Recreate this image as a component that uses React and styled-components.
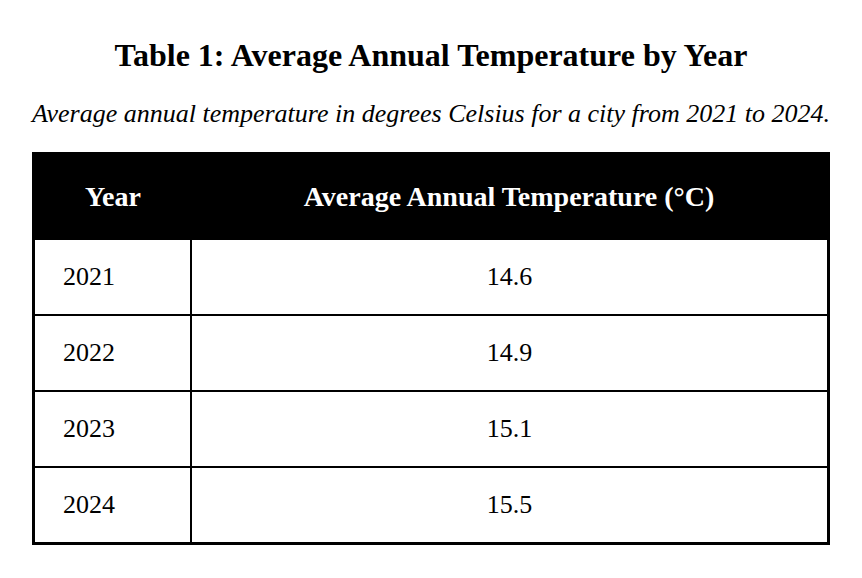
import React from "react";
import styled, { createGlobalStyle } from "styled-components";

const GlobalStyle = createGlobalStyle`
  html, body {
    margin: 0;
    padding: 0;
    background: #fff;
  }
  body {
    font-family: "Liberation Serif", "Times New Roman", serif;
    color: #000;
  }
`;

const Page = styled.div`
  padding: 37px 32px 0;
`;

const Title = styled.h1`
  margin: 0;
  font-size: 32px;
  font-weight: bold;
  text-align: center;
  line-height: 36px;
`;

const Caption = styled.p`
  margin: 26px 0 0;
  font-size: 26px;
  font-style: italic;
  text-align: center;
  line-height: 30px;
  white-space: nowrap;
`;

const Table = styled.table`
  width: 100%;
  margin-top: 23px;
  border-collapse: collapse;
  border: 3px solid #000;
`;

const HeadCell = styled.th`
  background: #000;
  color: #fff;
  font-size: 28px;
  font-weight: bold;
  height: 83px;
  padding: 0 28px;
  text-align: center;
  width: ${(p) => p.width || "auto"};
`;

const Cell = styled.td`
  font-size: 26px;
  height: 74px;
  padding: 0 28px;
  border: 2px solid #000;
  text-align: ${(p) => (p.center ? "center" : "left")};
`;

const rows = [
  ["2021", "14.6"],
  ["2022", "14.9"],
  ["2023", "15.1"],
  ["2024", "15.5"],
];

export default function App() {
  return (
    <>
      <GlobalStyle />
      <Page>
        <Title>Table 1: Average Annual Temperature by Year</Title>
        <Caption>
          Average annual temperature in degrees Celsius for a city from 2021 to 2024.
        </Caption>
        <Table>
          <thead>
            <tr>
              <HeadCell width="100px">Year</HeadCell>
              <HeadCell>Average Annual Temperature (°C)</HeadCell>
            </tr>
          </thead>
          <tbody>
            {rows.map(([year, temp]) => (
              <tr key={year}>
                <Cell>{year}</Cell>
                <Cell center>{temp}</Cell>
              </tr>
            ))}
          </tbody>
        </Table>
      </Page>
    </>
  );
}
